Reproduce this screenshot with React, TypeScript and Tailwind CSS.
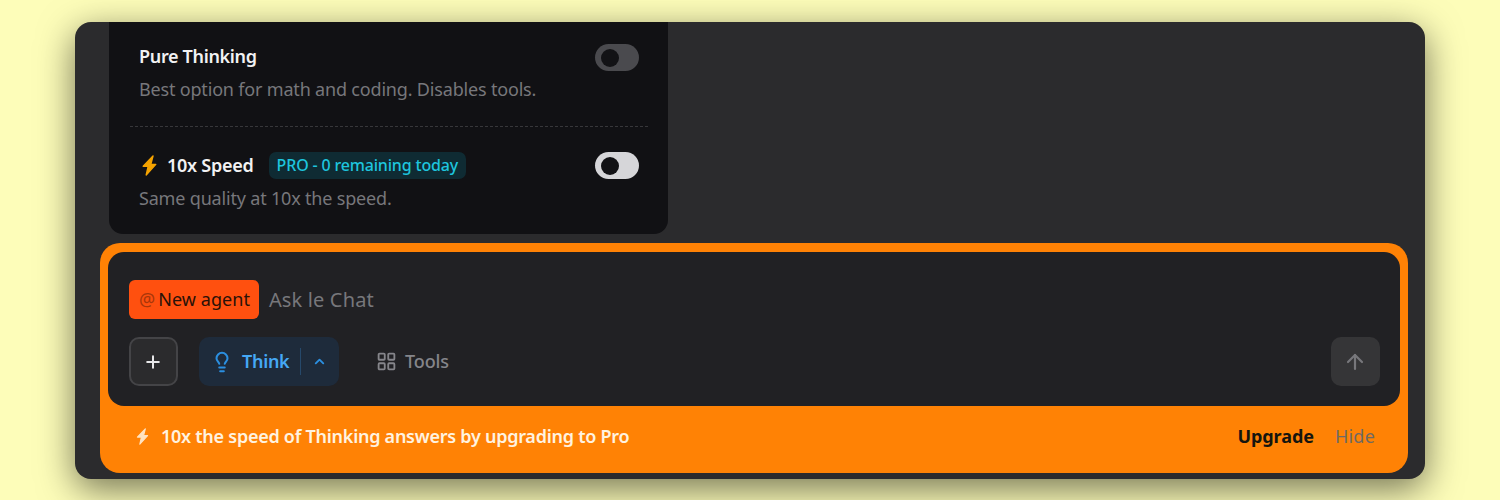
import { ChevronUp, Lightbulb, LayoutGrid, Plus, ArrowUp } from "lucide-react";

const Bolt = ({ className }: { className: string }) => (
  <svg viewBox="0 0 15 21" className={className} fill="currentColor" stroke="currentColor" strokeWidth={1.4} strokeLinejoin="round">
    <path d="M11 1 L1.2 11.2 L6.2 11.2 L4.2 20 L13.8 9.4 L8.8 9.4 Z" />
  </svg>
);

const Toggle = ({ on }: { on?: boolean }) => (
  <div className={`mt-px flex h-[27px] w-[44px] items-center rounded-full pl-[6px] ${on ? "bg-[#d6d6d9]" : "bg-[#4a4a4e]"}`}>
    <div className="h-[18px] w-[18px] rounded-full bg-[#121215]" />
  </div>
);

const App = () => {
  return (
    <div className="h-[500px] w-[1500px] overflow-hidden bg-[#fdfdb9] pt-[22px] pl-[75px] font-['Noto_Sans',sans-serif]">
      <div className="flex h-[457px] w-[1350px] flex-col rounded-[16px] bg-[#2b2b2d] pl-[25px] pr-[16px] shadow-[0_10px_36px_rgba(0,0,0,0.55)]">
        <div className="ml-[9px] h-[212px] w-[559px] rounded-b-[14px] bg-[#111114] pl-[21px] pr-[20px]">
          <div className="h-[105px] border-b border-dashed border-[#37373a] px-[9px] pt-[20px]">
            <div className="flex items-start justify-between">
              <div>
                <div className="text-[18px] leading-[28px] font-semibold tracking-[-0.33px] text-[#f2f2f3]">Pure Thinking</div>
                <div className="mt-[5px] text-[18px] leading-[28px] tracking-[-0.18px] text-[#77777b]">Best option for math and coding. Disables tools.</div>
              </div>
              <div className="pt-px">
                <Toggle />
              </div>
            </div>
          </div>
          <div className="px-[9px] pt-[24px]">
            <div className="flex items-start justify-between">
              <div>
                <div className="flex h-[28px] items-center">
                  <Bolt className="ml-[3px] mr-[10px] h-[21px] w-[15px] text-[#f5a300]" />
                  <span className="text-[18px] font-semibold tracking-[-0.25px] text-[#f2f2f3]">10x Speed</span>
                  <span className="ml-[15px] rounded-[7px] bg-[#0f2b33] px-[8px] text-[16px] leading-[27px] font-medium tracking-[-0.17px] text-[#1ec5de]">PRO - 0 remaining today</span>
                </div>
                <div className="mt-[5px] text-[18px] leading-[28px] tracking-[-0.18px] text-[#77777b]">Same quality at 10x the speed.</div>
              </div>
              <Toggle on />
            </div>
          </div>
        </div>

        <div className="mt-[9px] h-[230px] w-[1308px] rounded-[20px] bg-[#ff8205] px-[8px] pt-[9px]">
          <div className="h-[154px] rounded-[16px] bg-[#212124] pl-[21px] pr-[20px] pt-[28px]">
            <div className="flex items-center">
              <span className="flex h-[39px] items-center rounded-[6px] bg-[#ff500f] pl-[10px] pr-[9px] text-[18px] tracking-[0.05px] text-[#2a1208]">
                <span className="mr-[3px] text-[#a8360a]">@</span>New agent
              </span>
              <span className="ml-[10px] text-[20px] tracking-[0.15px] text-[#77777b]">Ask le Chat</span>
            </div>
            <div className="mt-[18px] flex items-center">
              <div className="flex h-[49px] w-[49px] items-center justify-center rounded-[10px] border-2 border-[#444447] bg-[#2b2b2d] text-[#e8e8ea]">
                <Plus size={20} strokeWidth={2.4} className="-ml-px" />
              </div>
              <div className="ml-[21px] flex h-[49px] w-[140px] items-center rounded-[10px] bg-[#1e2b3b]">
                <Lightbulb size={22} strokeWidth={2.2} className="ml-[12px] text-[#2b8fe0]" />
                <span className="ml-[9px] text-[18px] font-semibold tracking-[-0.3px] text-[#45a8f5]">Think</span>
                <div className="ml-[11px] h-[27px] w-px bg-[#26496b]" />
                <ChevronUp size={15} strokeWidth={3} className="ml-[11px] text-[#2b8fe0]" />
              </div>
              <div className="ml-[37px] flex items-center text-[#85858a]">
                <LayoutGrid size={21} strokeWidth={2.1} />
                <span className="ml-[8px] text-[18px] font-medium tracking-[-0.1px]">Tools</span>
              </div>
              <div className="ml-auto flex h-[49px] w-[49px] items-center justify-center rounded-[10px] bg-[#353537] text-[#77777b]">
                <ArrowUp size={24} strokeWidth={2.2} className="-ml-px" />
              </div>
            </div>
          </div>
          <div className="flex h-[61px] items-center pl-[28px] pr-[25px]">
            <Bolt className="mr-[11px] h-[17px] w-[13px] text-[#ffe3c2]" />
            <span className="ml-px text-[18px] font-semibold tracking-[-0.26px] text-[#fff3e0]">10x the speed of Thinking answers by upgrading to Pro</span>
            <span className="ml-auto text-[18px] font-bold tracking-[-0.05px] text-[#15150f]">Upgrade</span>
            <span className="ml-[21px] text-[18px] tracking-[0.2px] text-[#6e6a64]">Hide</span>
          </div>
        </div>
      </div>
    </div>
  );
};

export default App;
